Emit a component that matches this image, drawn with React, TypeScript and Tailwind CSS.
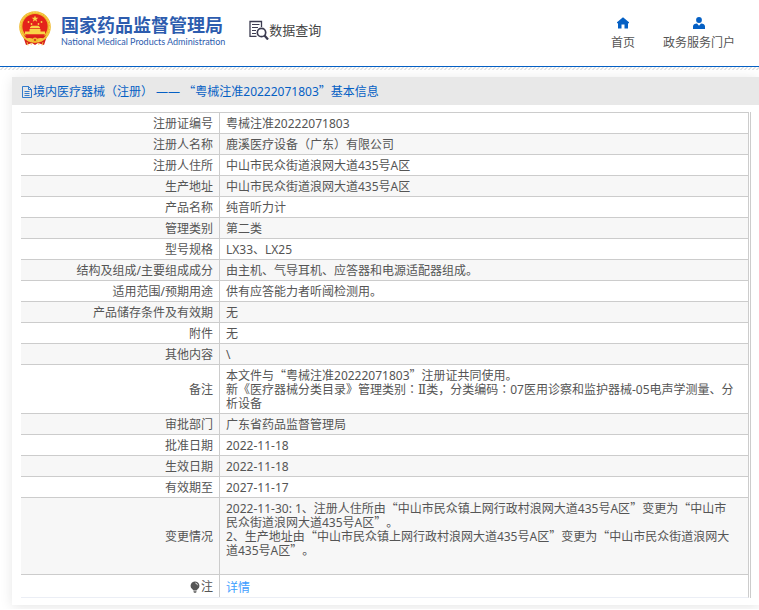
import type { ReactNode } from "react";
import clsx from "clsx";

interface Row {
  label: string;
  lines: string[];
}

const rows: Row[] = [
  { label: "注册证编号", lines: ["粤械注准20222071803"] },
  { label: "注册人名称", lines: ["鹿溪医疗设备（广东）有限公司"] },
  { label: "注册人住所", lines: ["中山市民众街道浪网大道435号A区"] },
  { label: "生产地址", lines: ["中山市民众街道浪网大道435号A区"] },
  { label: "产品名称", lines: ["纯音听力计"] },
  { label: "管理类别", lines: ["第二类"] },
  { label: "型号规格", lines: ["LX33、LX25"] },
  { label: "结构及组成/主要组成成分", lines: ["由主机、气导耳机、应答器和电源适配器组成。"] },
  { label: "适用范围/预期用途", lines: ["供有应答能力者听阈检测用。"] },
  { label: "产品储存条件及有效期", lines: ["无"] },
  { label: "附件", lines: ["无"] },
  { label: "其他内容", lines: ["\\"] },
  {
    label: "备注",
    lines: [
      "本文件与“粤械注准20222071803”注册证共同使用。",
      "新《医疗器械分类目录》管理类别：Ⅱ类，分类编码：07医用诊察和监护器械-05电声学测量、分析设备",
    ],
  },
  { label: "审批部门", lines: ["广东省药品监督管理局"] },
  { label: "批准日期", lines: ["2022-11-18"] },
  { label: "生效日期", lines: ["2022-11-18"] },
  { label: "有效期至", lines: ["2027-11-17"] },
  {
    label: "变更情况",
    lines: [
      "2022-11-30: 1、注册人住所由“中山市民众镇上网行政村浪网大道435号A区”变更为“中山市民众街道浪网大道435号A区”。",
      "2、生产地址由“中山市民众镇上网行政村浪网大道435号A区”变更为“中山市民众街道浪网大道435号A区”。",
      "",
    ],
  },
];

// Quotes and colons come from a CJK face so that they take a full cell
function Cjk({ text }: { text: string }) {
  return (
    <>
      {text.split(/([“”Ⅱ：])/).map((part, i) => {
        if (part === "“" || part === "”") {
          return (
            <span key={i} className="inline-block font-['Noto_Sans_CJK_SC',sans-serif] leading-3">
              {part}
            </span>
          );
        }
        if (part === "：") {
          return (
            <span key={i} lang="ja" className="inline-block font-['Noto_Sans_CJK_JP',sans-serif] leading-3">
              {part}
            </span>
          );
        }
        if (part === "Ⅱ") {
          return (
            <span key={i} className="inline-block font-['DejaVu_Serif',serif] leading-3">
              {part}
            </span>
          );
        }
        return part;
      })}
    </>
  );
}

function Emblem() {
  return (
    <svg viewBox="0 0 34 36" className="h-9 w-[34px]" aria-hidden="true">
      <path d="M5 25l3 9 6-2 3 2 3-2 6 2 3-9z" fill="#d8201c" />
      <circle cx="17" cy="16" r="15.8" fill="#f0b92c" />
      <circle cx="17" cy="16" r="14.6" fill="none" stroke="#f9d75c" strokeWidth="1" strokeDasharray="2 1" />
      <circle cx="17" cy="15.5" r="12.6" fill="#e4231b" />
      <path d="M17 4.500l.9 2.300h2.500l-2 1.500.8 2.400-2.200-1.500-2.200 1.500.8-2.400-2-1.500h2.500z" fill="#f9d548" />
      <g fill="#f9d548">
        <circle cx="10.500" cy="11" r=".9" />
        <circle cx="23.500" cy="11" r=".9" />
        <circle cx="13.500" cy="13" r=".9" />
        <circle cx="20.500" cy="13" r=".9" />
        <path d="M12 16.200l1.600-1.400h6.800l1.600 1.400v1h-10z" />
        <path d="M11.500 18h11v2.600h4.500v2.600H7v-2.600h4.500z" />
      </g>
      <path d="M6 24.500h22l-3 3H9z" fill="#d8201c" />
      <path d="M8 28c3-2 6-1 9 1 3-2 6-3 9-1l-2 2.200c-2-1-4-.6-5 .6h-4c-1-1.200-3-1.600-5-.6z" fill="#f5c53a" />
      <circle cx="17" cy="29" r="2.600" fill="#f0b92c" />
      <circle cx="17" cy="29" r="1" fill="#d8201c" />
      <path d="M9 31l1 3.500M25 31l-1 3.500M14 32l-1 2M20 32l1 2" stroke="#f5c53a" strokeWidth=".8" />
    </svg>
  );
}

function QueryIcon() {
  return (
    <svg viewBox="0 0 20 20" className="h-5 w-5" fill="none" stroke="#3c3c50" aria-hidden="true">
      <path d="M7.500 16.300H1V1.500h11.500V7" strokeWidth="1.300" />
      <path d="M3 4.500h7.500M3 7.500h6M3 10.500h4M3 13.500h4" strokeWidth="1" />
      <circle cx="12.500" cy="12.500" r="4.200" strokeWidth="1.700" />
      <path d="M15.500 15.500l3.500 4" strokeWidth="2.200" />
    </svg>
  );
}

function HomeIcon() {
  return (
    <svg viewBox="0 0 12 12" className="h-3 w-3" fill="#0560c4" aria-hidden="true">
      <path d="M6 .3L0 5.300v1h1V11.500h3.500V7.500h3v4H11V6.300h1v-1z" />
    </svg>
  );
}

function UserIcon() {
  return (
    <svg viewBox="0 0 12 12" className="h-3 w-3" fill="#0560c4" aria-hidden="true">
      <circle cx="6" cy="3" r="2.900" />
      <path d="M0 12V9.500C0 7.700 1.700 6.800 4 6.600l2 2.200 2-2.200c2.300.2 4 1.100 4 2.900V12z" />
    </svg>
  );
}

function DocIcon() {
  return (
    <svg viewBox="0 0 12 12" className="h-3 w-3 shrink-0" fill="none" stroke="#0560c4" aria-hidden="true">
      <path d="M1.500 .5h6l3 3v8h-9zM7.500 .5v3h3M3.500 5.500h5M3.500 7.500h5M3.500 9.500h5" strokeWidth=".8" />
    </svg>
  );
}

function BulbIcon() {
  return (
    <svg viewBox="0 0 10 12" className="h-3 w-[10px]" aria-hidden="true">
      <path d="M5 .5a4.300 4.300 0 00-2.800 7.600L3.500 9.500h3l1.300-1.400A4.300 4.300 0 005 .5z" fill="#555" />
      <path d="M3.500 10.200h3v.8L5.800 11.700H4.200l-.7-.7z" fill="#555" />
      <path d="M5.300 2q1.900.2 2.200 2.200" stroke="#fff" strokeWidth=".8" fill="none" />
    </svg>
  );
}

function NavLink({ icon, children }: { icon: ReactNode; children: ReactNode }) {
  return (
    <a href="#" className="flex flex-col items-center gap-1">
      {icon}
      <span className="leading-5">{children}</span>
    </a>
  );
}

export default function App() {
  return (
    <div className="bg-white pb-1 font-['Noto_Sans','Noto_Sans_CJK_SC',sans-serif] text-[12px] text-[#555]" lang="zh-CN">
      <header className="flex h-[67px] items-start border-b border-[#0560c4] pr-6 pl-[18px]">
        <a href="#" className="flex gap-[9px] pt-[11px] text-[#2d5cae]">
          <Emblem />
          <span className="flex flex-col pt-[3px] whitespace-nowrap">
            <span className="text-[18px] leading-[22px] font-bold">国家药品监督管理局</span>
            <span className="font-['Lato',sans-serif] text-[9px] leading-3">
              National Medical Products Administration
            </span>
          </span>
        </a>
        <a href="#" className="ml-6 flex items-center pt-5 text-[13px] leading-5 whitespace-nowrap text-[#444]">
          <QueryIcon />
          数据查询
        </a>
        <nav className="ml-auto flex gap-7 pt-[17px] whitespace-nowrap">
          <NavLink icon={<HomeIcon />}>首页</NavLink>
          <NavLink icon={<UserIcon />}>政务服务门户</NavLink>
        </nav>
      </header>
      <div className="h-[3px] bg-[linear-gradient(135deg,#fff_25%,#e4e4e4_25%,#e4e4e4_50%,#fff_50%,#fff_75%,#e4e4e4_75%)] bg-[length:4px_4px]" />

      <main className="mt-[7px] ml-3 bg-white pb-[7px] shadow-[0_2px_12px_rgba(0,0,0,0.1)]">
        <h1 className="flex h-7 items-center bg-[#e8e8e8] pt-px pl-[9px] text-[#0560c4]">
          <DocIcon />
          <span>
            <Cjk text="境内医疗器械（注册） —— “粤械注准20222071803”基本信息" />
          </span>
        </h1>
        <div className="mt-[7px] mr-2 ml-[9px] border-r border-[#ccc] pr-px">
          <table className="w-full table-fixed border-separate border-spacing-0 border-r border-b border-r-[#ccc] border-b-[#ebeef5] leading-[14px]">
            <tbody>
              {rows.map((row, i) => (
                <tr key={row.label} className={clsx(i % 2 === 1 && "bg-[#f7f7f7]")}>
                  <th
                    scope="row"
                    className="w-[199px] border-t border-r border-[#ccc] pt-1 pr-[6px] pb-[2px] text-right font-normal"
                  >
                    {row.label}
                  </th>
                  <td className="border-t border-[#ccc] pt-1 pr-3 pb-[2px] pl-[6px]">
                    {row.lines.map((line, n) => (
                      <p key={n} className="min-h-[14px]">
                        <Cjk text={line} />
                      </p>
                    ))}
                  </td>
                </tr>
              ))}
              <tr>
                <th scope="row" className="border-t border-r border-[#ccc] pt-[5px] pr-[6px] pb-[3px] font-normal">
                  <span className="flex items-center justify-end gap-px">
                    <BulbIcon />注
                  </span>
                </th>
                <td className="border-t border-[#ccc] pt-[6px] pr-3 pb-[2px] pl-[6px]">
                  <a href="#" className="text-[#409eff]">详情</a>
                </td>
              </tr>
            </tbody>
          </table>
        </div>
      </main>
    </div>
  );
}
